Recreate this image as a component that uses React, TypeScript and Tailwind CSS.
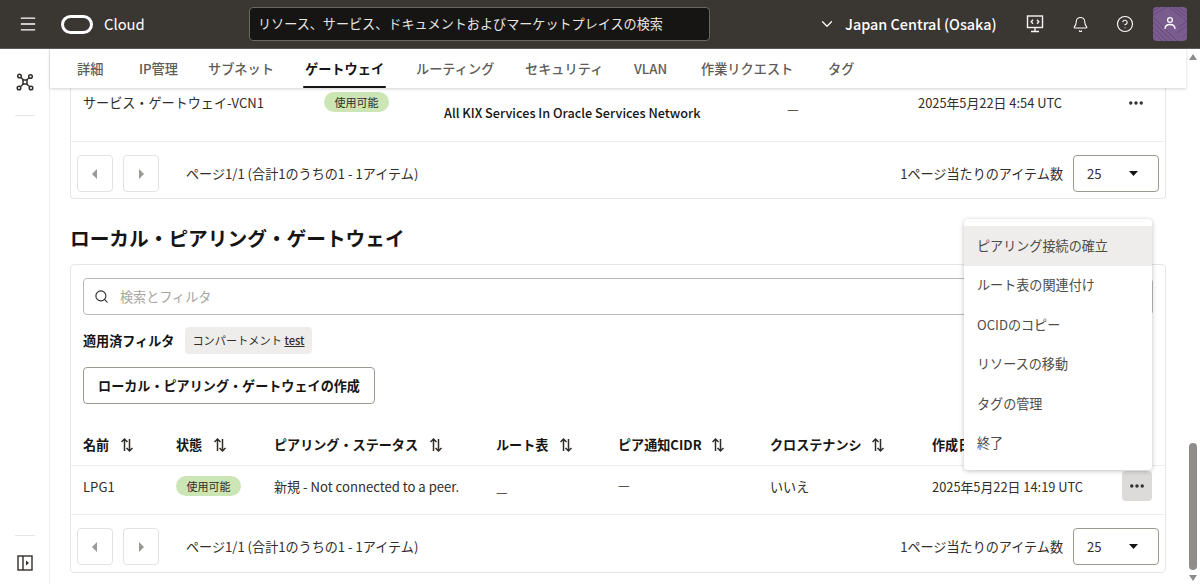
import { Menu, Bell, CircleHelp, ChevronDown, Search, Ellipsis } from "lucide-react";

const tabs = [
  { label: "詳細", w: "w-[62px]" },
  { label: "IP管理", w: "w-[69px]" },
  { label: "サブネット", w: "w-[97px]" },
  { label: "ゲートウェイ", w: "w-[111px]", active: true },
  { label: "ルーティング", w: "w-[109px]" },
  { label: "セキュリティ", w: "w-[109px]" },
  { label: "VLAN", w: "w-[67px]" },
  { label: "作業リクエスト", w: "w-[127px]" },
  { label: "タグ", w: "w-[40px]" },
];

const menuItems = ["ピアリング接続の確立", "ルート表の関連付け", "OCIDのコピー", "リソースの移動", "タグの管理", "終了"];

function SortIcon() {
  return (
    <svg width="14" height="16" viewBox="0 0 14 16" fill="none" stroke="#312d2a" strokeWidth="1.5" className="shrink-0">
      <path d="M4.5 14V2M1.500 5l3-3 3 3" />
      <path d="M9.500 2v12M6.500 11l3 3 3-3" />
    </svg>
  );
}

function Pagination() {
  return (
    <div className="flex items-start pb-[6px] pl-[6px] pr-[6px] pt-[13px] text-[13.1px] text-[#312d2a]">
      <button className="flex h-[37px] w-[36px] items-center justify-center rounded border border-[#e4e2e0]">
        <svg width="6" height="10" viewBox="0 0 6 10" fill="#9a9794"><path d="M5 0v10L0 5z" /></svg>
      </button>
      <button className="ml-[10px] flex h-[37px] w-[36px] items-center justify-center rounded border border-[#e4e2e0]">
        <svg width="6" height="10" viewBox="0 0 6 10" fill="#9a9794"><path d="M1 0v10l5-5z" /></svg>
      </button>
      <span className="ml-[27px] self-center">ページ1/1 (合計1のうちの1 - 1アイテム)</span>
      <span className="ml-auto self-center">1ページ当たりのアイテム数</span>
      <div className="ml-[10px] flex h-[37px] w-[86px] items-center justify-between rounded border border-[#9e9892] pl-[13px] pr-[20px]">
        <span>25</span>
        <svg width="9" height="5" viewBox="0 0 9 5" fill="#161513"><path d="M0 0h9L4.500 5z" /></svg>
      </div>
    </div>
  );
}

function Badge() {
  return (
    <span className="inline-flex h-[20px] w-[65px] items-center justify-center rounded-full bg-[#cce5b5] text-[11px] text-[#312d2a]">
      使用可能
    </span>
  );
}

export default function App() {
  return (
    <div
      className="flex h-[584px] w-[1200px] flex-col overflow-hidden bg-white text-[#312d2a]"
      style={{ fontFamily: '"Noto Sans CJK JP", sans-serif' }}
    >
      <header className="flex h-[49px] shrink-0 items-center border-b border-[#5e5a56] bg-[#3a3632] text-white">
        <div className="flex w-[249px] shrink-0 items-center">
          <Menu size={20} strokeWidth={1.6} className="ml-[18px]" />
          <svg width="32" height="19" viewBox="0 0 32 19" fill="none" stroke="#fff" strokeWidth="3" className="ml-[23px]">
            <rect x="1.500" y="1.500" width="29" height="16" rx="8" />
          </svg>
          <span className="ml-[11px] text-[14.8px]">Cloud</span>
        </div>
        <div className="flex h-[34px] w-[461px] shrink-0 items-center rounded border border-[#6b6762] bg-[#161513] pl-[8px] text-[13.1px] text-[#e8e6e3]">
          リソース、サービス、ドキュメントおよびマーケットプレイスの検索
        </div>
        <ChevronDown size={18} strokeWidth={1.6} className="ml-[108px]" />
        <span className="ml-[9px] text-[14.4px] font-medium">Japan Central (Osaka)</span>
        <div className="ml-auto flex items-center pr-[13px]">
          <svg width="18" height="18" viewBox="0 0 18 18" fill="none" stroke="#f5f4f2" strokeWidth="1.4">
            <rect x="1.500" y="1" width="15" height="11.500" />
            <path d="M9 12.500V16M5 16.500h8" />
            <path d="M7 4.800 5.200 6.800 7 8.800M11 4.800l1.800 2L11 8.800" />
          </svg>
          <Bell size={17} strokeWidth={1.5} className="ml-[28px]" />
          <CircleHelp size={18} strokeWidth={1.5} className="ml-[27px]" />
          <div className="ml-[19px] flex h-[34px] w-[34px] items-center justify-center overflow-hidden rounded bg-[#7b5c8e]">
            <svg width="34" height="34" viewBox="0 0 34 34" fill="none">
              <g stroke="#68497c" strokeWidth="1">
                <path d="M20 0l14 10M16 0l18 14M24 0l10 6M0 20l14 14M0 25l9 9M0 15l19 19M0 10l24 24" />
                <path d="M0 8l14-8M0 4l7-4M26 20l8-6M24 26l10-7M30 30l4-4" />
              </g>
              <circle cx="17" cy="13" r="2.400" stroke="#fff" strokeWidth="1.300" />
              <path d="M12 22c0-3 2-4.500 5-4.500s5 1.500 5 4.500" stroke="#fff" strokeWidth="1.300" />
            </svg>
          </div>
        </div>
      </header>

      <div className="flex min-h-0 flex-1">
        <aside className="flex w-[50px] shrink-0 flex-col items-center border-r border-[#eeedeb]">
          <svg width="18" height="18" viewBox="0 0 18 18" fill="none" stroke="#312d2a" strokeWidth="1.500" className="mt-[24px]">
            <circle cx="3.500" cy="3" r="1.800" />
            <circle cx="14.500" cy="3.500" r="1.800" />
            <circle cx="3" cy="15" r="1.800" />
            <circle cx="15" cy="15" r="1.800" />
            <rect x="7" y="7" width="4" height="4" />
            <path d="M5 4.500 7.500 7M13 5l-2.500 2M4.500 13.500 7.500 11M13.500 13.500 10.500 11" />
          </svg>
          <div className="mt-[24px] h-px w-[20px] bg-[#e8e6e3]" />
          <div className="mt-auto h-px w-[20px] bg-[#e8e6e3]" />
          <svg width="16" height="16" viewBox="0 0 16 16" fill="none" stroke="#312d2a" strokeWidth="1.400" className="mb-[13px] mt-[19px]">
            <rect x="1" y="1" width="14" height="14" />
            <path d="M6 1v14" />
            <path d="M9 5.500v5l3-2.500z" fill="#312d2a" stroke="none" />
          </svg>
        </aside>

        <main className="relative flex min-w-0 flex-1 flex-col">
          <nav className="z-10 flex h-[39px] shrink-0 items-center bg-white pl-[27px] text-[13.2px] shadow-[0_1px_3px_rgba(0,0,0,0.18)]">
            {tabs.map((t) => (
              <span
                key={t.label}
                className={`relative shrink-0 ${t.w} ${t.active ? "font-bold text-[#161513]" : "font-medium text-[#5f5b57]"}`}
              >
                {t.label}
                {t.active && <span className="absolute left-[-2px] top-[27px] h-[2px] w-[83px] rounded bg-[#161513]" />}
              </span>
            ))}
          </nav>

          <div className="min-h-0 flex-1 overflow-hidden pl-[20px] pr-[20px]">
            <section className="rounded-b border border-t-0 border-[#e8e6e3]">
              <div className="grid h-[54px] grid-cols-[241px_120px_343px_131px_1fr] border-b border-[#eeedeb] pl-[12px] text-[13.1px]">
                <span className="pt-[5px]">サービス・ゲートウェイ-VCN1</span>
                <span className="pt-[4px]"><Badge /></span>
                <span className="pt-[15px] text-[12.7px] font-medium text-[#161513]">All KIX Services In Oracle Services Network</span>
                <span className="pt-[11px]">—</span>
                <div className="flex items-start justify-between pr-[20px] pt-[5px]">
                  <span className="text-[12.85px]">2025年5月22日 4:54 UTC</span>
                  <Ellipsis size={18} strokeWidth={2.600} className="mt-[1px]" />
                </div>
              </div>
              <Pagination />
            </section>

            <h2 className="mt-[24px] text-[19.7px] font-bold leading-[30px] text-[#161513]">ローカル・ピアリング・ゲートウェイ</h2>

            <section className="mt-[11px] rounded border border-[#e8e6e3] pb-[1px]">
              <div className="px-[12px] pt-[13px]">
                <div className="flex h-[37px] items-center rounded border border-[#bdb9b5] pl-[10px] text-[13.1px] text-[#a8a5a1]">
                  <Search size={15} strokeWidth={1.800} className="text-[#312d2a]" />
                  <span className="ml-[11px]">検索とフィルタ</span>
                </div>
                <div className="mt-[12px] flex h-[27px] items-center">
                  <span className="text-[13.1px] font-bold text-[#161513]">適用済フィルタ</span>
                  <span className="ml-[11px] flex h-[27px] items-center rounded bg-[#eeedeb] px-[7px] text-[11.200px]">
                    コンパートメント&nbsp;<span className="font-medium underline">test</span>
                  </span>
                </div>
                <button className="mt-[13px] flex h-[37px] w-[292px] items-center justify-center rounded border border-[#9e9892] text-[13.1px] font-bold text-[#161513]">
                  ローカル・ピアリング・ゲートウェイの作成
                </button>
              </div>

              <div className="mt-[31px] grid h-[31px] grid-cols-[93px_98px_222px_122px_152px_162px_1fr] items-start border-b border-[#eeedeb] pl-[12px] text-[13.1px] font-bold text-[#161513]">
                <span className="flex items-center gap-[11px]">名前 <SortIcon /></span>
                <span className="flex items-center gap-[11px]">状態 <SortIcon /></span>
                <span className="flex items-center gap-[11px]">ピアリング・ステータス <SortIcon /></span>
                <span className="flex items-center gap-[11px]">ルート表 <SortIcon /></span>
                <span className="flex items-center gap-[9px]">ピア通知CIDR <SortIcon /></span>
                <span className="flex items-center gap-[9px]">クロステナンシ <SortIcon /></span>
                <span>作成日</span>
              </div>
              <div className="grid h-[49px] grid-cols-[93px_98px_222px_122px_152px_162px_1fr] border-b border-[#eeedeb] pl-[12px] text-[13.1px]">
                <span className="pt-[11px]">LPG1</span>
                <span className="pt-[10px]"><Badge /></span>
                <span className="pt-[11px]">新規 - Not connected to a peer.</span>
                <span className="pt-[16px]">—</span>
                <span className="pt-[9px]">—</span>
                <span className="pt-[11px]">いいえ</span>
                <div className="flex items-start justify-between pr-[13px] pt-[11px]">
                  <span className="text-[12.85px]">2025年5月22日 14:19 UTC</span>
                  <span className="mt-[-6px] flex h-[30px] w-[30px] items-center justify-center rounded bg-[#dcdbd9]">
                    <Ellipsis size={18} strokeWidth={2.600} />
                  </span>
                </div>
              </div>
              <Pagination />
            </section>
          </div>

          <div className="absolute left-[914px] top-[170px] w-[188px] rounded bg-white py-[7px] text-[13.1px] text-[#4f4b47] shadow-[0_1px_5px_rgba(0,0,0,0.25)]">
            {menuItems.map((m, i) => (
              <div key={m} className={`flex h-[39.500px] items-center pl-[13px] ${i === 0 ? "bg-[#eeedeb]" : ""}`}>
                {m}
              </div>
            ))}
          </div>
        </main>

        <div className="flex w-[14px] shrink-0 flex-col items-center bg-white">
          <svg width="8" height="6" viewBox="0 0 8 6" fill="#8f8c89" className="mt-[5px]"><path d="M4 0l4 6H0z" /></svg>
          <div className="mt-auto h-[127px] w-[8px] rounded-full bg-[#8f8c89]" />
          <svg width="8" height="6" viewBox="0 0 8 6" fill="#8f8c89" className="mb-[3px] mt-[5px]"><path d="M0 0h8L4 6z" /></svg>
        </div>
      </div>
    </div>
  );
}
